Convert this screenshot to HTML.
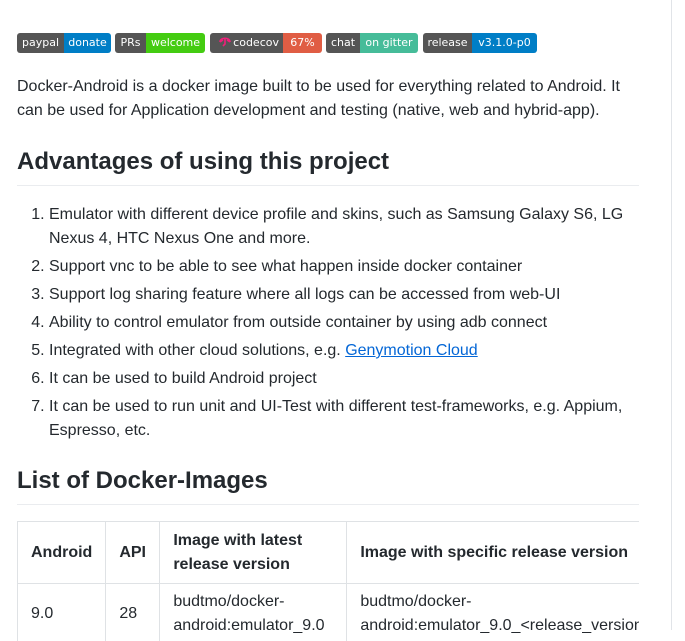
<!DOCTYPE html>
<html><head><meta charset="utf-8"><style>
*{margin:0;padding:0;box-sizing:border-box}
body{width:685px;height:630px;overflow:hidden;background:#fff;font-family:"Liberation Sans",Arial,sans-serif;color:#24292e;font-size:16px;line-height:24px;position:relative}
.vl{position:absolute;left:671px;top:0;width:1px;height:630px;background:#e1e4e8}
.badges{position:absolute;left:17px;top:33px;height:20px;display:flex;font-family:"DejaVu Sans",sans-serif;font-size:11px;color:#fff}
.b{display:flex;height:20px;border-radius:3px;overflow:hidden;margin-right:4px}
.b span{display:block;height:20px;line-height:20px;text-align:center}
.l{background:#555}
.p{position:absolute;left:17px;top:75px;width:620px}
h2{position:absolute;left:17px;width:622px;font-size:24px;font-weight:bold;line-height:30px;border-bottom:1px solid #eaecef;padding-bottom:8px}
ol{position:absolute;left:17px;top:203px;width:622px;padding-left:32px}
li{margin-bottom:4px}
a{color:#0366d6;text-decoration:underline}
.tw{position:absolute;left:17px;top:521px;width:622px;overflow:hidden;height:120px}
table{border-collapse:collapse;width:700px}
td,th{border:1px solid #dfe2e5;padding:6px 13px;text-align:left;vertical-align:middle}
th{font-weight:bold;height:62px}
td{height:60px;vertical-align:top;padding-top:6px}
</style></head><body>
<div class="vl"></div>
<div class="badges">
<div class="b"><span class="l" style="width:47px">paypal</span><span style="width:47px;background:#007ec6">donate</span></div>
<div class="b"><span class="l" style="width:31px">PRs</span><span style="width:59px;background:#4c1">welcome</span></div>
<div class="b" style="margin-left:1px"><span class="l" style="width:73px;text-align:right;padding-right:4px"><svg width="14" height="12" viewBox="0 0 14 12" style="position:relative;top:1px;margin-right:1px"><path d="M2 7 C2 2 12 2 12 7 M2 7 L5 5 M12 7 L9 5 M7 4 V9 L5 11" stroke="#f01f7a" stroke-width="1.6" fill="none"/></svg>codecov</span><span style="width:39px;background:#e05d44">67%</span></div>
<div class="b"><span class="l" style="width:34px">chat</span><span style="width:58px;background:#46bc99">on gitter</span></div>
<div class="b" style="margin-left:1px"><span class="l" style="width:49px">release</span><span style="width:65px;background:#007ec6">v3.1.0-p0</span></div>
</div>
<div class="p">Docker-Android is a docker image built to be used for everything related to Android. It can be used for Application development and testing (native, web and hybrid-app).</div>
<h2 style="top:147px">Advantages of using this project</h2>
<ol>
<li>Emulator with different device profile and skins, such as Samsung Galaxy S6, LG Nexus 4, HTC Nexus One and more.</li>
<li>Support vnc to be able to see what happen inside docker container</li>
<li>Support log sharing feature where all logs can be accessed from web-UI</li>
<li>Ability to control emulator from outside container by using adb connect</li>
<li>Integrated with other cloud solutions, e.g. <a>Genymotion Cloud</a></li>
<li>It can be used to build Android project</li>
<li>It can be used to run unit and UI-Test with different test-frameworks, e.g. Appium, Espresso, etc.</li>
</ol>
<h2 style="top:466px">List of Docker-Images</h2>
<div class="tw"><table>
<tr><th style="width:88px">Android</th><th style="width:54px">API</th><th style="width:187px">Image with latest release version</th><th>Image with specific release version</th></tr>
<tr><td style="padding-top:18px">9.0</td><td style="padding-top:18px">28</td><td>budtmo/docker-android:emulator_9.0</td><td>budtmo/docker-android:emulator_9.0_&lt;release_version&gt;</td></tr>
</table></div>
</body></html>
